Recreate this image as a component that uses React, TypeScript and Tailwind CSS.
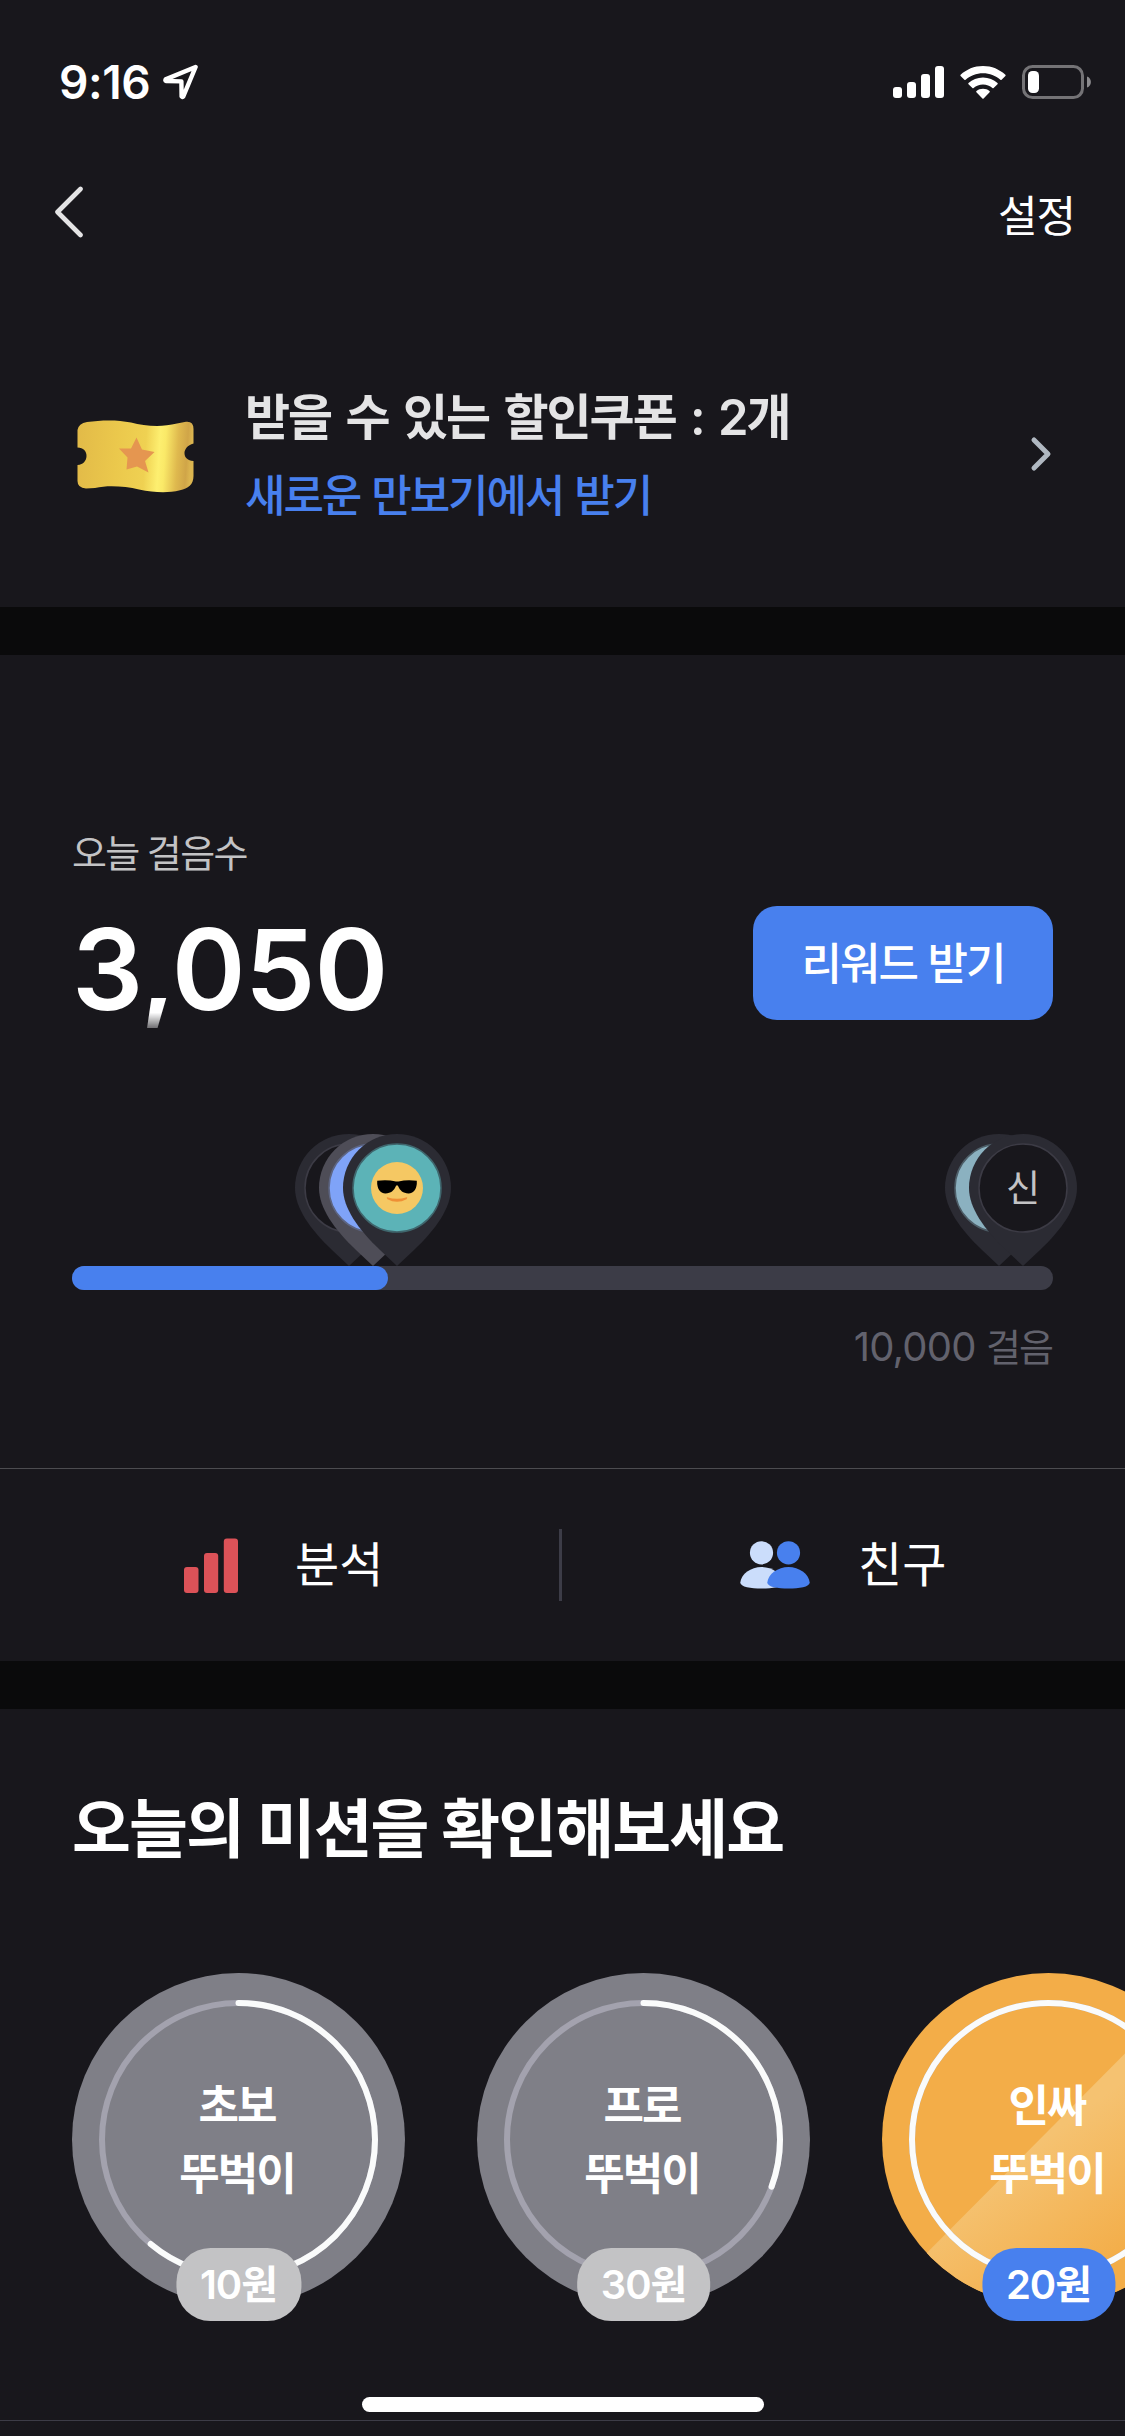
import React from "react";

// ===========================
// PEDOMETER SCREEN
// ===========================

interface Mission {
  id: string;
  title: string;
  reward: string;
  progress: number;
  done: boolean;
}

const GOAL_STEPS = 10000;

const missions: Mission[] = [
  { id: "beginner", title: "초보", reward: "10원", progress: 0.611, done: false },
  { id: "pro", title: "프로", reward: "30원", progress: 0.306, done: false },
  { id: "insider", title: "인싸", reward: "20원", progress: 1, done: true },
];

// ---------- Icons ----------

function LocationIcon() {
  return (
    <svg width="36" height="36" viewBox="0 0 36 36" fill="none">
      <path
        d="M32.6 3 L2.6 15.4 Q2 16.6 3 17 L18.4 17.4 L18.6 32.4 Q19.2 33.4 20.2 32.6 Z"
        stroke="#fff"
        strokeWidth="4.4"
        strokeLinejoin="round"
      />
    </svg>
  );
}

function SignalIcon() {
  return (
    <svg width="51" height="32" viewBox="0 0 51 32" fill="#fff">
      <rect x="0" y="21" width="9" height="11" rx="3" />
      <rect x="14" y="16" width="9" height="16" rx="3" />
      <rect x="28" y="8" width="9" height="24" rx="3" />
      <rect x="42" y="0" width="9" height="32" rx="3" />
    </svg>
  );
}

function WifiIcon() {
  return (
    <svg width="46" height="33" viewBox="0 0 46 33" fill="#fff">
      <path d="M23 0 C31.800 0 39.600 3.400 45.400 8.800 Q46 9.400 45.400 10 L41.600 13.800 Q41 14.400 40.400 13.800 C35.700 9.600 29.700 7.200 23 7.200 C16.300 7.200 10.300 9.600 5.600 13.800 Q5 14.400 4.400 13.800 L0.600 10 Q0 9.400 0.600 8.800 C6.400 3.400 14.200 0 23 0 Z" />
      <path d="M23 11.400 C28.700 11.400 33.700 13.500 37.500 17 Q38.100 17.600 37.500 18.200 L33.600 22.100 Q33 22.600 32.400 22.100 C29.900 19.900 26.600 18.600 23 18.600 C19.400 18.600 16.100 19.900 13.600 22.100 Q13 22.600 12.400 22.100 L8.500 18.200 Q7.900 17.600 8.500 17 C12.300 13.500 17.300 11.400 23 11.400 Z" />
      <path d="M23 22.800 C25.600 22.800 27.700 23.600 29.500 25.100 Q30.200 25.700 29.600 26.300 L23.600 32.400 Q23 33 22.400 32.400 L16.400 26.300 Q15.800 25.700 16.500 25.100 C18.300 23.600 20.400 22.800 23 22.800 Z" />
    </svg>
  );
}

function BatteryIcon() {
  return (
    <svg width="70" height="34" viewBox="0 0 70 34">
      <rect
        x="1.5"
        y="1.5"
        width="59"
        height="31"
        rx="9"
        fill="none"
        stroke="#747376"
        strokeWidth="3"
      />
      <rect x="6" y="6" width="11" height="22" rx="4.500" fill="#fff" />
      <path d="M65 11.500 C70.200 13 70.200 21 65 22.500 Z" fill="#8c8b8e" />
    </svg>
  );
}

function TicketIcon() {
  return (
    <svg width="117" height="73" viewBox="0 0 117 73">
      <defs>
        <linearGradient id="ticket" x1="0" x2="1" y1="0" y2="0.040">
          <stop offset="0" stopColor="#e2ba48" />
          <stop offset="0.350" stopColor="#ebc84c" />
          <stop offset="0.600" stopColor="#efd152" />
          <stop offset="0.720" stopColor="#fdef70" />
          <stop offset="0.770" stopColor="#fae968" />
          <stop offset="0.880" stopColor="#dfb94e" />
          <stop offset="0.960" stopColor="#d0a548" />
          <stop offset="1" stopColor="#dcb650" />
        </linearGradient>
      </defs>
      <path
        d="M10 2 C24 0 40 -0.500 54 2.500 C68 6 84 7.500 100 3.500 L109 1.800 Q116.500 1 116.500 9 L116.500 23.500 C104 27 105 41 116.500 41 L116.500 56 C116.500 65 111 68.500 103 70.300 C90 73.500 77 72.500 62 69.500 C48 66.500 32 65 18 68 L9 68.500 Q0.500 68 0.500 61 L0.500 45 C12.500 44 12.500 27.500 0.500 27.500 L0.500 10 Q1.500 3.500 10 2 Z"
        fill="url(#ticket)"
      />
      <path
        d="M59.500 17.500 L65 29.500 L77.500 32 L68 41 L71.500 52.500 L60 46.500 L49.500 49.500 L50.500 37.500 L42 28.500 L54 28.500 Z"
        fill="#e59650"
      />
    </svg>
  );
}

function AnalysisIcon() {
  return (
    <svg width="54" height="56" viewBox="0 0 54 56" fill="#dc5258">
      <rect x="0" y="30" width="14.500" height="26" rx="3" />
      <rect x="20" y="16" width="14.200" height="40" rx="3" />
      <rect x="39.800" y="1.500" width="14.200" height="54.500" rx="3" />
    </svg>
  );
}

function FriendsIcon() {
  return (
    <svg width="70" height="48" viewBox="0 0 70 48">
      <g fill="#cbddfb">
        <circle cx="21.500" cy="11.800" r="11.600" />
        <path d="M21.500 26 C32 26 42.500 33 43 41.500 C43 46 32 47.500 21.500 47.500 C11 47.500 0.300 46 0.300 41.500 C1 33 11 26 21.500 26 Z" />
      </g>
      <g fill="#4880ee">
        <circle cx="48.500" cy="11.800" r="11.600" />
        <path d="M48.500 26 C59 26 69 33 69.700 41.500 C69.700 46 59 47.500 48.500 47.500 C38 47.500 27.300 46 27.300 41.500 C28 33 38 26 48.500 26 Z" />
      </g>
    </svg>
  );
}

// ---------- Step pins ----------

function Pin({
  color = "#2b2b33",
  fill = "#18171c",
  stroke = "#3c3b45",
  className = "",
  children,
}: {
  color?: string;
  fill?: string;
  stroke?: string;
  className?: string;
  children?: React.ReactNode;
}) {
  return (
    <svg
      width="108"
      height="132"
      viewBox="0 0 108 132"
      className={`shrink-0 ${className}`}
    >
      <path
        d="M54 132 L37 116 C15 95 0 74 0 54 A54 54 0 0 1 108 54 C108 74 93 95 71 116 Z"
        fill={color}
      />
      <circle cx="54" cy="54" r="44" fill={fill} stroke={stroke} strokeWidth="1.500" />
      {children}
    </svg>
  );
}

function CoolFace() {
  return (
    <>
      <circle cx="54" cy="54" r="26" fill="#f5c863" />
      <path
        d="M34.200 46.800 Q44 45.600 53 47.400 Q54.300 47.700 55.500 47.400 Q64 45.600 73.800 46.800 L73.800 50 C73 56.500 70 59.500 65.500 59.400 C60 59.200 57 56.500 55.200 52.200 Q54 50.400 52.800 52.200 C51 56.500 48 59.200 42.500 59.400 C38 59.500 35 56.500 34.200 50 Z"
        fill="#000"
      />
      <path
        d="M44.200 63.300 Q54 66.300 63.800 63.300 Q65 63.500 63.500 65.200 Q54 70.500 44.500 65.200 Q43 63.500 44.200 63.300 Z"
        fill="#ef8f35"
      />
    </>
  );
}

// ---------- Missions ----------

function MissionBadge({ mission }: { mission: Mission }) {
  const radius = 136.5;
  const length = 2 * Math.PI * radius;

  return (
    <div className="relative flex h-[333px] w-[333px] shrink-0 flex-col items-center justify-center">
      <svg
        width="333"
        height="333"
        viewBox="0 0 333 333"
        fill="none"
        className="absolute inset-0"
      >
        <defs>
          <linearGradient
            id="shine"
            gradientUnits="userSpaceOnUse"
            x1="150"
            y1="175"
            x2="235"
            y2="290"
          >
            <stop offset="0" stopColor="#f5c271" />
            <stop offset="1" stopColor="#f3ad48" />
          </linearGradient>
          <clipPath id="disc">
            <circle cx="166.500" cy="166.500" r="166.500" />
          </clipPath>
        </defs>
        <circle
          cx="166.500"
          cy="166.500"
          r="166.500"
          fill={mission.done ? "#f3ad48" : "#7f7f87"}
        />
        {mission.done && (
          <path
            d="M0 325 L333 -10 L333 333 L0 333 Z"
            fill="url(#shine)"
            clipPath="url(#disc)"
          />
        )}
        <circle
          cx="166.500"
          cy="166.500"
          r={radius}
          stroke="#a3a2ae"
          strokeWidth="6"
        />
        <circle
          cx="166.500"
          cy="166.500"
          r={radius}
          stroke="#fafbfb"
          strokeWidth="6"
          strokeLinecap="round"
          strokeDasharray={`${length * mission.progress} ${length}`}
          transform="rotate(-90 166.500 166.500)"
        />
      </svg>
      <div className="relative pr-[3px] text-center text-[44px] leading-[68px] font-semibold tracking-[-2px]">
        <p>{mission.title}</p>
        <p>뚜벅이</p>
      </div>
      <span
        className={`absolute top-[275px] left-1/2 flex h-[73px] -translate-x-1/2 items-center rounded-[34px] px-6 text-[40px] leading-none font-semibold tracking-[-1px] ${
          mission.done ? "bg-[#4880ee]" : "bg-[#c3c3c5]"
        }`}
      >
        {mission.reward}
      </span>
    </div>
  );
}

// ---------- Page ----------

export default function App() {
  return (
    <div className="relative flex h-[2436px] w-[1125px] flex-col overflow-hidden bg-[#18171c] font-[Inter,'Noto_Sans_CJK_KR',sans-serif] text-white">
      {/* Status bar */}
      <div className="flex h-[132px] items-center justify-between pt-8 pr-[33px] pl-[59px]">
        <div className="flex items-center gap-[13px]">
          <span className="text-[46px] leading-none font-semibold tracking-[-0.4px]">
            9:16
          </span>
          <LocationIcon />
        </div>
        <div className="flex items-center gap-4">
          <SignalIcon />
          <WifiIcon />
          <BatteryIcon />
        </div>
      </div>

      {/* Navigation */}
      <header className="flex h-[168px] items-center justify-between pr-[50px] pl-[54px]">
        <svg
          width="30"
          height="52"
          viewBox="0 0 30 52"
          fill="none"
          className="-mt-2"
        >
          <path
            d="M26.500 3 L3.500 26 L26.500 49"
            stroke="#e4e4e5"
            strokeWidth="4.600"
            strokeLinecap="round"
            strokeLinejoin="round"
          />
        </svg>
        <span className="text-[43px] leading-none tracking-[-1px]">설정</span>
      </header>

      {/* Coupon banner */}
      <section className="flex h-[307px] items-center pt-[5px] pr-[73px] pl-[77px]">
        <TicketIcon />
        <div className="mt-[2px] ml-[51px] flex-1 leading-[78px]">
          <p className="text-[49px] font-semibold tracking-[-2px] text-[#e4e4e5] [word-spacing:4px]">
            받을 수 있는 할인쿠폰 : 2개
          </p>
          <p className="text-[44px] font-medium tracking-[-2.1px] text-[#4880ee] [word-spacing:1.5px]">
            새로운 만보기에서 받기
          </p>
        </div>
        <svg
          width="22"
          height="36"
          viewBox="0 0 22 36"
          fill="none"
          className="-mt-1"
        >
          <path
            d="M4 4 L18 18 L4 32"
            stroke="#b0b8c1"
            strokeWidth="5"
            strokeLinecap="round"
            strokeLinejoin="round"
          />
        </svg>
      </section>

      <div className="h-12 bg-[#0a0a0b]" />

      {/* Today's steps */}
      <section className="h-[813px] pt-[172px]">
        <div className="px-[72px]">
          <p className="text-[38px] leading-[52px] tracking-[-1.6px] text-[#c3c3c5] [word-spacing:-1px]">
            오늘 걸음수
          </p>
          <div className="mt-[27px] flex h-[114px] items-center justify-between">
            <span className="mt-[13px] [mask-image:linear-gradient(#000_82%,rgba(0,0,0,0.4)_93%,transparent_93%)] text-[112px] leading-[135px] font-semibold tracking-[-0.8px]">
              3,050
            </span>
            <button className="h-[114px] w-[300px] rounded-[24px] bg-[#4880ee] pt-px text-[44px] leading-none font-medium tracking-[-2px] [word-spacing:1px]">
              리워드 받기
            </button>
          </div>
        </div>
        <div className="mt-[114px] flex justify-between pr-12 pl-[295px]">
          <div className="flex">
            <Pin />
            <Pin
              color="#4e4d57"
              fill="#7fa3f8"
              stroke="#5d6582"
              className="-ml-[84px]"
            />
            <Pin fill="#5cb3b7" stroke="#3f666d" className="-ml-[84px]">
              <CoolFace />
            </Pin>
          </div>
          <div className="flex">
            <Pin fill="#8bb1c0" stroke="#4d5d67" />
            <Pin className="-ml-[84px]">
              <text
                x="54"
                y="68"
                textAnchor="middle"
                fontSize="37"
                fill="#c3c3c5"
              >
                신
              </text>
            </Pin>
          </div>
        </div>
        <div className="mx-[72px] h-6 rounded-full bg-[#3c3c47]">
          <div className="h-6 w-[316px] rounded-full bg-[#4880ee]" />
        </div>
        <p className="mt-[29px] pr-[73px] text-right text-[40px] leading-[56px] tracking-[-0.8px] text-[#62626d]">
          {GOAL_STEPS.toLocaleString("en-US")}{" "}
          <span className="text-[38px] tracking-[-2px]">걸음</span>
        </p>
      </section>

      {/* Shortcuts */}
      <nav className="flex h-[193px] items-center border-t border-[#4c4c50] text-[48px] leading-none">
        <div className="flex w-[559px] items-center gap-[57px] pl-[184px]">
          <AnalysisIcon />
          <span>분석</span>
        </div>
        <div className="h-[72px] w-[3px] bg-[#3c3c47]" />
        <div className="flex flex-1 items-center gap-12 pl-[178px]">
          <FriendsIcon />
          <span>친구</span>
        </div>
      </nav>

      <div className="h-12 bg-[#0a0a0b]" />

      {/* Missions */}
      <section className="h-[712px] border-b border-[#3c3c47] pt-20">
        <h1 className="px-[72px] text-[64px] leading-[80px] font-semibold tracking-[-1.9px] [word-spacing:-0.5px]">
          오늘의 미션을 확인해보세요
        </h1>
        <div className="mt-[104px] flex gap-[72px] pl-[72px]">
          {missions.map((mission) => (
            <MissionBadge key={mission.id} mission={mission} />
          ))}
        </div>
      </section>

      {/* Home indicator */}
      <div className="absolute top-[2397px] left-[362px] h-[15px] w-[402px] rounded-full bg-white" />
    </div>
  );
}
